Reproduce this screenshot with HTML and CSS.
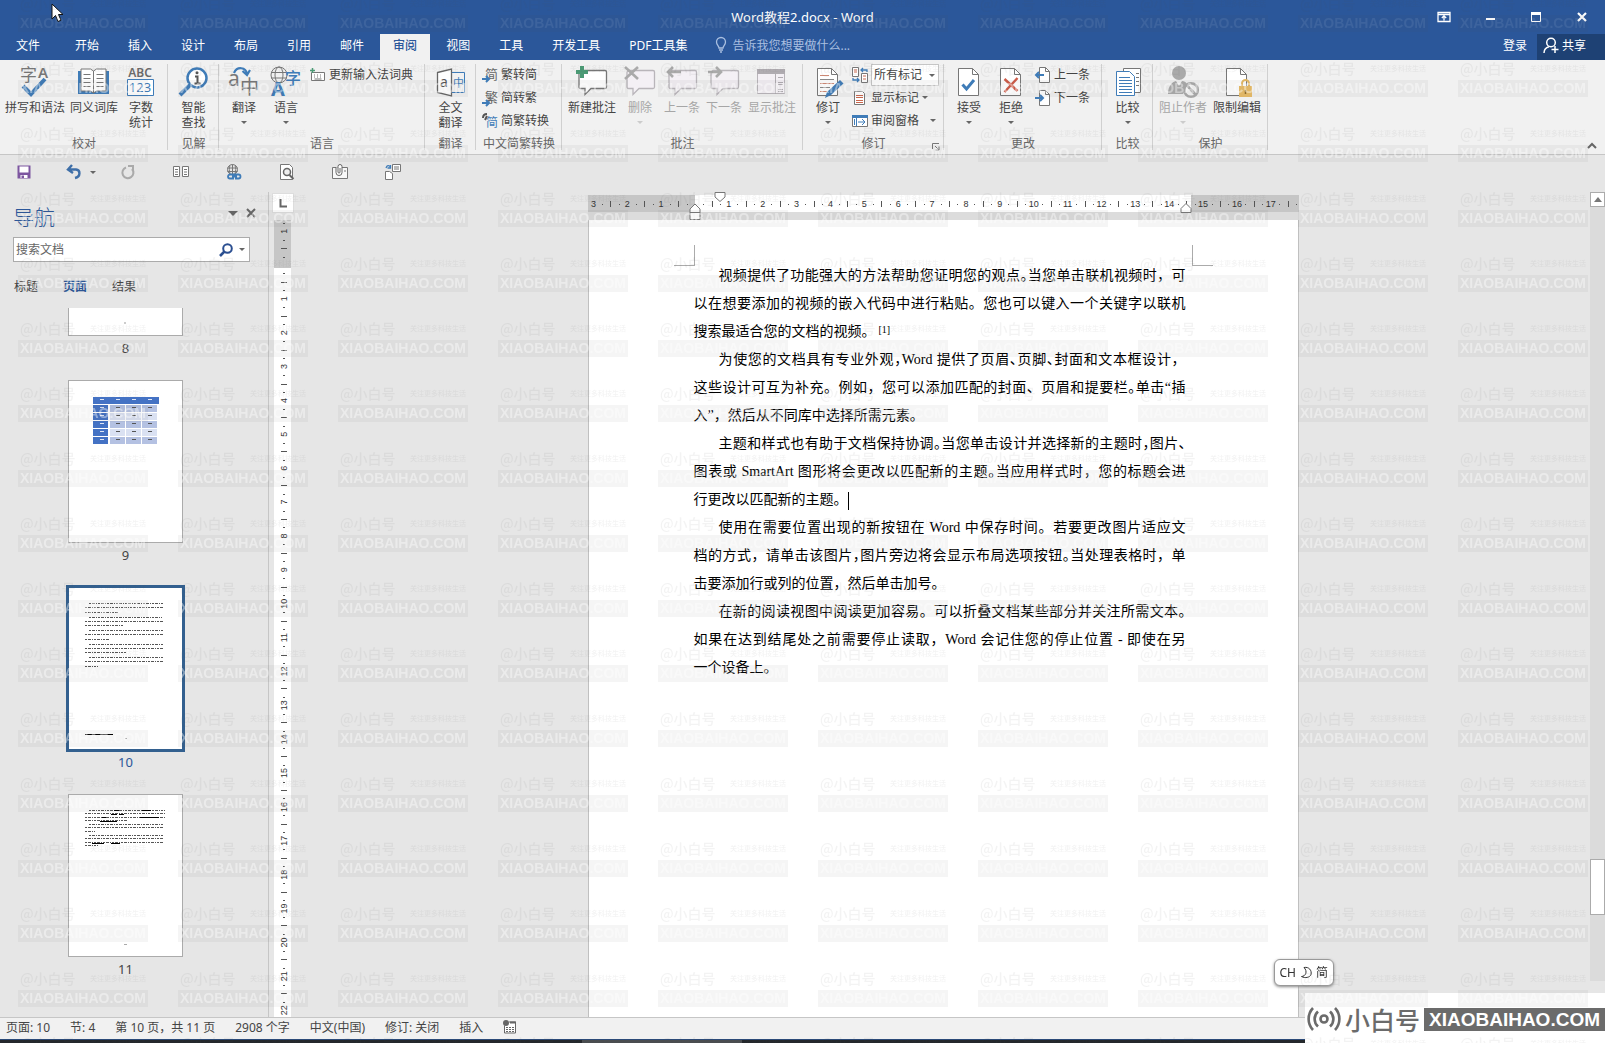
FILE: index.html
```html
<!DOCTYPE html>
<html lang="zh-CN">
<head>
<meta charset="utf-8">
<title>Word教程2.docx - Word</title>
<link rel="stylesheet" href="styles.css">
</head>
<body>
<header class="titlebar">
  <h1 class="doc-title">Word教程2.docx - Word</h1>
  <div class="window-controls">
    <button class="win-btn" aria-label="功能区显示选项"><svg width="14" height="12" viewBox="0 0 14 12"><path d="M1 1.500h12v9H1zM1 3.500h12M7 9.500V5M4.800 7L7 4.800 9.200 7" fill="none" stroke="#fff" stroke-width="1.300"/></svg></button>
    <button class="win-btn" aria-label="最小化"><svg width="14" height="12" viewBox="0 0 14 12"><path d="M3 8h9" stroke="#fff" stroke-width="2"/></svg></button>
    <button class="win-btn" aria-label="最大化"><svg width="14" height="12" viewBox="0 0 14 12"><path d="M2.500 1.500h9v9h-9z" fill="none" stroke="#fff"/><path d="M2 2.500h10" stroke="#fff" stroke-width="3"/></svg></button>
    <button class="win-btn" aria-label="关闭"><svg width="14" height="12" viewBox="0 0 14 12"><path d="M3 2l8 8M11 2l-8 8" stroke="#fff" stroke-width="2.200"/></svg></button>
  </div>
</header>

<nav class="tabs">
  <button class="tab tab-file">文件</button>
  <button class="tab">开始</button>
  <button class="tab">插入</button>
  <button class="tab">设计</button>
  <button class="tab">布局</button>
  <button class="tab">引用</button>
  <button class="tab">邮件</button>
  <button class="tab tab-active">审阅</button>
  <button class="tab">视图</button>
  <button class="tab">工具</button>
  <button class="tab">开发工具</button>
  <button class="tab">PDF工具集</button>
  <button class="tell-me"><svg width="12" height="16" viewBox="0 0 12 16"><path d="M4 11C4 9 1.500 8 1.500 5a4.500 4.500 0 0 1 9 0C10.500 8 8 9 8 11zM4 13h4M5 15h2" fill="none" stroke="#a9bfe0" stroke-width="1.300"/></svg>告诉我您想要做什么...</button>
  <button class="sign-in">登录</button>
  <button class="share"><svg width="16" height="17" viewBox="0 0 16 17"><circle cx="8" cy="5.500" r="4.300" fill="none" stroke="#fff" stroke-width="1.500"/><path d="M1 16c0-3 2-5.500 5-6.200M8.500 12.500h7M12 9v7" fill="none" stroke="#fff" stroke-width="1.500"/></svg>共享</button>
</nav>

<section class="ribbon">
  <div class="group g-proof">
    <div class="tools">
      <button class="big w60"><svg width="32" height="32" viewBox="0 0 32 32"><text x="1" y="15" font-size="17" fill="#777">字</text><text x="19" y="12" font-size="15" font-weight="600" fill="#777">A</text><path d="M4 20l8 8L26 13" fill="none" stroke="#3f7cb8" stroke-width="4"/></svg><span>拼写和语法</span></button>
      <button class="big w48"><svg width="32" height="32" viewBox="0 0 32 32"><path d="M0 5v23h31V5" fill="#3f7cb8"/><path d="M3 3h9.500l3 2 3-2H28v22h-9.500l-3 2-3-2H3z" fill="#fff" stroke="#777"/><path d="M15.500 5v22M5.500 8.500h7M5.500 12.500h7M5.500 16.500h7M5.500 20.500h7M18.500 8.500h7M18.500 12.500h7M18.500 16.500h7M18.500 20.500h7" stroke="#777"/></svg><span>同义词库</span></button>
      <button class="big w36"><svg width="32" height="32" viewBox="0 0 32 32"><text x="15" y="11" text-anchor="middle" font-size="12" font-weight="600" fill="#6a6a6a">ABC</text><path d="M2.500 13.500h26v16h-26z" fill="#fff" stroke="#3f7cb8"/><text x="15" y="26" text-anchor="middle" font-size="13" fill="#3f7cb8">123</text></svg><span>字数<br>统计</span></button>
    </div>
    <h2 class="group-name">校对</h2>
  </div>
  <div class="group g-50">
    <div class="tools center">
      <button class="big w36"><svg width="32" height="32" viewBox="0 0 32 32"><path d="M2 29l10-10" stroke="#3f7cb8" stroke-width="4"/><circle cx="19" cy="12" r="9.500" fill="#fff" stroke="#3f7cb8" stroke-width="2.500"/><path d="M17 10.500h2.500V17M16.500 17.500h6" fill="none" stroke="#555" stroke-width="2"/><circle cx="19" cy="6.800" r="1.500" fill="#555"/></svg><span>智能<br>查找</span></button>
    </div>
    <h2 class="group-name">见解</h2>
  </div>
  <div class="group g-lang">
    <div class="tools">
      <button class="big w36"><svg width="32" height="32" viewBox="0 0 32 32"><text x="0" y="20" font-size="21" fill="#777">a</text><text x="12" y="28" font-size="19" fill="#777">中</text><path d="M6 7c3-7 12-6 13 1M14.500 5l4.500 4 3-5" fill="none" stroke="#3f7cb8" stroke-width="2.200"/></svg><span>翻译</span><i class="caret"></i></button>
      <button class="big w36"><svg width="32" height="32" viewBox="0 0 32 32"><circle cx="9" cy="9" r="8" fill="none" stroke="#777"/><ellipse cx="9" cy="9" rx="4" ry="8" fill="none" stroke="#777"/><path d="M1 6.500h16M1 12h16" stroke="#777"/><text x="15" y="18" font-size="16" font-weight="500" fill="#3f7cb8">字</text><text x="1" y="30" font-size="20" font-weight="700" fill="#3f7cb8">A</text></svg><span>语言</span><i class="caret"></i></button>
      <div class="rows">
        <button class="small"><svg width="16" height="14" viewBox="0 0 16 14"><path d="M1.500 4.500h13v8h-13z" fill="#fff" stroke="#777"/><path d="M4 7h1M7 7h1M10 7h1M13 7h0M4 9h1M7 9h1M10 9h1M4.500 11h7" stroke="#777"/><path d="M0 2.500h5M2.500 0v5" stroke="#4b9a75" stroke-width="1.500"/></svg>更新输入法词典</button>
      </div>
    </div>
    <h2 class="group-name">语言</h2>
  </div>
  <div class="group g-50">
    <div class="tools center">
      <button class="big w36"><svg width="32" height="32" viewBox="0 0 32 32"><path d="M2.500 6.500L16.500 3v27l-14-3.500z" fill="#fff" stroke="#666" stroke-width="1.300"/><path d="M17 6.500h12.500v20H17" fill="none" stroke="#3f7cb8"/><text x="5" y="21" font-size="14" fill="#555">a</text><text x="18" y="21" font-size="11" fill="#3f7cb8">中</text></svg><span>全文<br>翻译</span></button>
    </div>
    <h2 class="group-name">翻译</h2>
  </div>
  <div class="group g-conv">
    <div class="tools">
      <div class="rows">
        <button class="small"><svg width="16" height="16" viewBox="0 0 16 16"><text x="3" y="12" font-size="13" fill="#666">简</text><path d="M0 12h6M4 9l3 3-3 3" fill="none" stroke="#3f7cb8" stroke-width="2"/></svg>繁转简</button>
        <button class="small"><svg width="16" height="16" viewBox="0 0 16 16"><text x="3" y="12" font-size="13" fill="#666">繁</text><path d="M0 13h6M4 10l3 3-3 3" fill="none" stroke="#3f7cb8" stroke-width="2"/></svg>简转繁</button>
        <button class="small"><svg width="16" height="16" viewBox="0 0 16 16"><text x="4" y="14" font-size="12" fill="#3f7cb8">简</text><path d="M1 5c0-3 1-4 4-4M3 7l2-4" fill="none" stroke="#555" stroke-width="2"/></svg>简繁转换</button>
      </div>
    </div>
    <h2 class="group-name">中文简繁转换</h2>
  </div>
  <div class="group g-comment">
    <div class="tools">
      <button class="big w48"><svg width="32" height="32" viewBox="0 0 32 32"><path d="M5 4.500h24a1.500 1.500 0 0 1 1.500 1.500v15a1.500 1.500 0 0 1-1.500 1.500H15l-6 6v-6H4.500a1.500 1.500 0 0 1-1.500-1.500V6z" fill="#fff" stroke="#777" stroke-width="1.300"/><path d="M0 6h12M6 0v12" stroke="#4b9a75" stroke-width="4"/></svg><span>新建批注</span></button>
      <button class="big w36" disabled><svg width="32" height="32" viewBox="0 0 32 32"><path d="M5 4.500h24a1.500 1.500 0 0 1 1.500 1.500v15a1.500 1.500 0 0 1-1.500 1.500H15l-6 6v-6H4.500a1.500 1.500 0 0 1-1.500-1.500V6z" fill="#f4f0f5" stroke="#b9b5ba" stroke-width="1.300"/><path d="M1 1l13 12M14 1L1 13" stroke="#aaa" stroke-width="2.600"/></svg><span>删除</span><i class="caret"></i></button>
      <button class="big w36" disabled><svg width="32" height="32" viewBox="0 0 32 32"><path d="M5 4.500h24a1.500 1.500 0 0 1 1.500 1.500v15a1.500 1.500 0 0 1-1.500 1.500H15l-6 6v-6H4.500a1.500 1.500 0 0 1-1.500-1.500V6z" fill="#f4f0f5" stroke="#b9b5ba" stroke-width="1.300"/><path d="M2 6h13M7 1L2 6l5 5" fill="none" stroke="#aaa" stroke-width="2.600"/></svg><span>上一条</span></button>
      <button class="big w36" disabled><svg width="32" height="32" viewBox="0 0 32 32"><path d="M5 4.500h24a1.500 1.500 0 0 1 1.500 1.500v15a1.500 1.500 0 0 1-1.500 1.500H15l-6 6v-6H4.500a1.500 1.500 0 0 1-1.500-1.500V6z" fill="#f4f0f5" stroke="#b9b5ba" stroke-width="1.300"/><path d="M0 6h13M8 1l5 5-5 5" fill="none" stroke="#aaa" stroke-width="2.600"/></svg><span>下一条</span></button>
      <button class="big w48" disabled><svg width="32" height="32" viewBox="0 0 32 32"><path d="M1.500 3.500h27v24h-27z" fill="#f4f0f5" stroke="#b9b5ba"/><path d="M1 5.500h28" stroke="#b0acb1" stroke-width="5"/><path d="M19.500 8v20M22 11.500h5M22 16.500h5M22 18.500h5M22 23.500h5M22 25.500h5" stroke="#b0acb1"/></svg><span>显示批注</span></button>
    </div>
    <h2 class="group-name">批注</h2>
  </div>
  <div class="group g-track">
    <div class="tools">
      <button class="big w36"><svg width="32" height="32" viewBox="0 0 32 32"><path d="M5.500 2.500h14l6 6v21h-20z" fill="#fff" stroke="#777"/><path d="M19.500 2.500v6h6" fill="none" stroke="#777"/><path d="M8 9.500h9M8 17.500h14M8 25.500h7" stroke="#d08a76"/><path d="M8 13.500h14M8 21.500h10" stroke="#888"/><path d="M13 32l2-6L28 14l3.500 3.500L19 29z" fill="#3f7cb8"/></svg><span>修订</span><i class="caret"></i></button>
      <div class="rows">
        <div class="small">
          <svg width="16" height="16" viewBox="0 0 16 16"><path d="M.5.500h6v9h-6zM9.500 6.500h6v9h-6z" fill="#fff" stroke="#777"/><path d="M2 3h3M2 5h3M11 9h3M11 12h3" stroke="#c8664d"/><path d="M15 5V3H9M11 1L9 3l2 2M1 11v2h6M5 11l2 2-2 2" fill="none" stroke="#3f7cb8" stroke-width="1.300"/></svg>
          <span class="select-wrap"><select class="markup-select" aria-label="显示以供审阅"><option>所有标记</option></select></span>
        </div>
        <button class="small"><svg width="16" height="16" viewBox="0 0 16 16"><path d="M2.500 1.500h8l2 2v11h-10z" fill="#fff" stroke="#777"/><path d="M4 5.500h7M4 7.500h7M4 10.500h7M4 12.500h7" stroke="#c8664d"/></svg>显示标记<i class="caret"></i></button>
        <button class="small spread"><svg width="16" height="16" viewBox="0 0 16 16"><path d="M.5 2.500h15v11H.5z" fill="#fff" stroke="#777"/><path d="M0 3.500h16" stroke="#3f7cb8" stroke-width="3"/><path d="M4.500 5v8M6 9h7M10 6l3 3-3 3M2.500 6v6" fill="none" stroke="#3f7cb8"/></svg>审阅窗格<i class="caret"></i></button>
      </div>
    </div>
    <h2 class="group-name">修订</h2>
    <button class="launcher" aria-label="修订选项"><svg width="8" height="8" viewBox="0 0 8 8"><path d="M.5 6V.5H7M3 3l4 4M7 3.500V7H3.500" fill="none" stroke="#777"/></svg></button>
  </div>
  <div class="group g-change">
    <div class="tools">
      <button class="big w36"><svg width="32" height="32" viewBox="0 0 32 32"><path d="M5.500 2.500h14l6 6v21h-20z" fill="#fff" stroke="#777"/><path d="M19.500 2.500v6h6" fill="none" stroke="#777"/><path d="M9.500 18.500l4 4.500L21 14" fill="none" stroke="#3f7cb8" stroke-width="3"/></svg><span>接受</span><i class="caret"></i></button>
      <button class="big w36"><svg width="32" height="32" viewBox="0 0 32 32"><path d="M5.500 2.500h14l6 6v21h-20z" fill="#fff" stroke="#777"/><path d="M19.500 2.500v6h6" fill="none" stroke="#777"/><path d="M9.500 13l13 12M22.500 12L9.500 26" stroke="#cf5b48" stroke-width="2.400"/></svg><span>拒绝</span><i class="caret"></i></button>
      <div class="rows">
        <button class="small"><svg width="16" height="16" viewBox="0 0 16 16"><path d="M4.500.5h6l4 4v11h-10z" fill="#fff" stroke="#777"/><path d="M10.500.5v4h4" fill="none" stroke="#777"/><path d="M1 8h8M4 5L1 8l3 3" fill="none" stroke="#3f7cb8" stroke-width="2"/></svg>上一条</button>
        <button class="small"><svg width="16" height="16" viewBox="0 0 16 16"><path d="M4.500.5h6l4 4v11h-10z" fill="#fff" stroke="#777"/><path d="M10.500.5v4h4" fill="none" stroke="#777"/><path d="M0 8h8M5 5l3 3-3 3" fill="none" stroke="#3f7cb8" stroke-width="2"/></svg>下一条</button>
      </div>
    </div>
    <h2 class="group-name">更改</h2>
  </div>
  <div class="group g-50">
    <div class="tools center">
      <button class="big w36"><svg width="32" height="32" viewBox="0 0 32 32"><path d="M11.500 2.500h17v24h-17z" fill="#fff" stroke="#777"/><path d="M4.500 5.500h13l5 5v19h-18z" fill="#fff" stroke="#3f7cb8"/><path d="M7 11.500h11M7 14.500h13M7 17.500h13M7 20.500h13M7 23.500h13M7 26.500h13" stroke="#3f7cb8"/><path d="M24 7.500h3M24 11.500h3M24 15.500h3M24 19.500h3" stroke="#777"/></svg><span>比较</span><i class="caret"></i></button>
    </div>
    <h2 class="group-name">比较</h2>
  </div>
  <div class="group g-protect">
    <div class="tools">
      <button class="big w48" disabled><svg width="32" height="32" viewBox="0 0 32 32"><circle cx="12" cy="7" r="7" fill="#aaa"/><path d="M1 28c0-8 4-12 8-13l3 5 3-5c2 0 4 1 5 3l-4 10z" fill="#aaa"/><circle cx="24" cy="24" r="6.800" fill="#f4f4f4" stroke="#aaa" stroke-width="2.600"/><path d="M19.500 19l9 9.500" stroke="#aaa" stroke-width="2.600"/></svg><span>阻止作者</span><i class="caret"></i></button>
      <button class="big w48"><svg width="32" height="32" viewBox="0 0 32 32"><path d="M5.500 2.500h14l6 6v21h-20z" fill="#fff" stroke="#777"/><path d="M19.500 2.500v6h6" fill="none" stroke="#777"/><path d="M21 21v-3.500a3.500 3.500 0 0 1 7 0V21" fill="none" stroke="#e5b964" stroke-width="2"/><path d="M18 20h13v11H18z" fill="#e9bd68"/><path d="M24.500 24v4" stroke="#8d6a2a" stroke-width="1.500"/></svg><span>限制编辑</span></button>
    </div>
    <h2 class="group-name">保护</h2>
  </div>
  <button class="collapse" aria-label="折叠功能区"><svg width="10" height="8" viewBox="0 0 10 8"><path d="M1 6l4-4 4 4" fill="none" stroke="#666" stroke-width="2"/></svg></button>
</section>

<div class="quick">
  <button aria-label="保存"><svg width="16" height="16" viewBox="0 0 16 16"><path d="M1.500 1.500h13v13h-13z" fill="#7d56a0"/><path d="M3.500 2.500h9v6h-9zM4.500 11h7v3h-7z" fill="#fff"/><path d="M5.500 11.500h2.500v2.500H5.500z" fill="#7d56a0"/></svg></button>
  <button class="undo" aria-label="撤消"><svg width="16" height="16" viewBox="0 0 16 16"><path d="M6 1L2 5.500 7 9M2.500 5.500H10c4.500.5 5 7-1 8.500" fill="none" stroke="#3f6fa8" stroke-width="2.400"/></svg><i class="caret"></i></button>
  <button aria-label="恢复"><svg width="16" height="16" viewBox="0 0 16 16"><path d="M6 3.500a5.500 5.500 0 1 0 6 1.500M8 2h5v5" fill="none" stroke="#aaa" stroke-width="2"/></svg></button>
  <button aria-label="双页"><svg width="16" height="16" viewBox="0 0 16 16"><path d="M.5 2.500h6v10h-6zM9.500 2.500h6v10h-6z" fill="#fff" stroke="#777"/><path d="M2 5.500h3M2 8h3M2 10.500h3M11 5.500h3M11 8h3M11 10.500h3" stroke="#777"/></svg></button>
  <button aria-label="超链接"><svg width="16" height="16" viewBox="0 0 16 16"><circle cx="6.500" cy="5.500" r="5" fill="none" stroke="#777"/><path d="M1.500 4h10M1.500 7.500h10M6.500.5v10M4 1.500c-1 3-1 5 0 8M9 1.500c1 3 1 5 0 8" fill="none" stroke="#777"/><path d="M8 10.500H4a2 2 0 0 0 0 4h4M8 10.500h4.500a2 2 0 0 1 0 4H9M6 12.500h5" fill="none" stroke="#3f7cb8" stroke-width="1.800"/></svg></button>
  <button aria-label="打印预览"><svg width="16" height="16" viewBox="0 0 16 16"><path d="M1.500.5h9l3 3v12h-12z" fill="#fff" stroke="#777"/><circle cx="8" cy="8" r="3.500" fill="#eee" stroke="#666" stroke-width="1.500"/><path d="M10.500 11l4 4" stroke="#666" stroke-width="2"/></svg></button>
  <button aria-label="附件"><svg width="16" height="16" viewBox="0 0 16 16"><path d="M.5 3.500h15v11H.5z" fill="#f8f8f8" stroke="#777"/><path d="M4 3v5.500a3 3 0 0 0 6 0V2.500a2 2 0 0 0-4 0V8c0 1.500 2 1.500 2 0V4" fill="#fff" stroke="#666"/><path d="M12 7h2" stroke="#777"/></svg></button>
  <button aria-label="切换窗口"><svg width="16" height="16" viewBox="0 0 16 16"><path d="M7.500.5h8v7h-8z" fill="#fff" stroke="#777"/><path d="M9 3h5M9 5h5" stroke="#777"/><path d="M.5 7.500h4l3 2v6h-7z" fill="#fff" stroke="#777"/><path d="M1 4c1-3 3-3 4.500-1M5.500 1v3h-3" fill="none" stroke="#3f7cb8" stroke-width="1.300"/></svg></button>
</div>

<main class="workspace">
  <aside class="nav-pane">
    <div class="nav-head">
      <h2>导航</h2>
      <button class="nav-menu" aria-label="任务窗格选项"><i class="caret caret-lg"></i></button>
      <button class="nav-close" aria-label="关闭"><svg width="10" height="10" viewBox="0 0 10 10"><path d="M1 1l8 8M9 1L1 9" stroke="#666" stroke-width="2"/></svg></button>
    </div>
    <div class="search">
      <input type="text" placeholder="搜索文档" aria-label="搜索文档">
      <button aria-label="搜索"><svg width="14" height="14" viewBox="0 0 14 14"><circle cx="8.500" cy="5.500" r="4.300" fill="none" stroke="#2b4f91" stroke-width="2"/><path d="M1 13l4.500-4.500" stroke="#2b4f91" stroke-width="2.600"/></svg></button>
      <i class="caret"></i>
    </div>
    <div class="nav-tabs">
      <button>标题</button>
      <button class="on">页面</button>
      <button>结果</button>
    </div>
    <ol class="thumbs">
      <li><div class="thumb"><svg width="113" height="161" viewBox="0 0 113 161"><path d="M56 148v2" stroke="#999"/></svg></div><span>8</span></li>
      <li><div class="thumb"><svg id="thumbTable" width="113" height="161" viewBox="0 0 113 161"></svg></div><span>9</span></li>
      <li class="current"><div class="thumb"><svg id="thumbText" width="113" height="161" viewBox="0 0 113 161"></svg></div><span>10</span></li>
      <li><div class="thumb"><svg id="thumbMarked" width="113" height="161" viewBox="0 0 113 161"></svg></div><span>11</span></li>
    </ol>
  </aside>

  <div class="v-side">
    <button class="tab-stop" aria-label="左对齐制表符"><svg width="8" height="9" viewBox="0 0 8 9"><path d="M1.500 0v7.500H8" fill="none" stroke="#666" stroke-width="2"/></svg></button>
    <svg class="v-ruler" id="vRuler"></svg>
  </div>

  <div class="canvas">
    <div class="h-ruler">
      <svg id="hRuler" width="711" height="17"></svg>
      <svg class="indent indent-first" width="12" height="10" viewBox="0 0 12 10"><path d="M1 .5h10v4.500l-5 4.500L1 5z" fill="#fff" stroke="#777"/></svg>
      <svg class="indent indent-left" width="12" height="17" viewBox="0 0 12 17"><path d="M1 16.500V6l5-5 5 5v10.500zM1 9.500h10" fill="#fff" stroke="#777"/></svg>
      <svg class="indent indent-right" width="12" height="10" viewBox="0 0 12 10"><path d="M1 9.500V5.500l5-5 5 5v4z" fill="#fff" stroke="#777"/></svg>
    </div>
    <article class="page">
      <div class="crop-marks"><i></i><i></i></div>
      <div class="doc">
        <p><span class="ln first">视频提供了功能强大的方法帮助您证明您的观点<b>。</b>当您单击联机视频时，可</span><span class="ln">以在想要添加的视频的嵌入代码中进行粘贴。您也可以键入一个关键字以联机</span><span class="ln last">搜索最适合您的文档的视频。<sup>[1]</sup></span></p>
        <p><span class="ln first">为使您的文档具有专业外观<b>，</b>Word 提供了页眉<b>、</b>页脚<b>、</b>封面和文本框设计，</span><span class="ln">这些设计可互为补充。例如，您可以添加匹配的封面、页眉和提要栏<b>。</b>单击“插</span><span class="ln last">入”，然后从不同库中选择所需元素。</span></p>
        <p><span class="ln first">主题和样式也有助于文档保持协调<b>。</b>当您单击设计并选择新的主题时<b>，</b>图片<b>、</b></span><span class="ln">图表或 SmartArt 图形将会更改以匹配新的主题<b>。</b>当应用样式时，您的标题会进</span><span class="ln last">行更改以匹配新的主题。<i class="text-cursor"></i></span></p>
        <p><span class="ln first">使用在需要位置出现的新按钮在 Word 中保存时间。若要更改图片适应文</span><span class="ln">档的方式，请单击该图片<b>，</b>图片旁边将会显示布局选项按钮<b>。</b>当处理表格时，单</span><span class="ln last">击要添加行或列的位置，然后单击加号。</span></p>
        <p><span class="ln first">在新的阅读视图中阅读更加容易。可以折叠文档某些部分并关注所需文本<b>。</b></span><span class="ln">如果在达到结尾处之前需要停止读取，Word 会记住您的停止位置 - 即使在另</span><span class="ln last">一个设备上。</span></p>
      </div>
    </article>
  </div>

  <div class="scrollbar">
    <button aria-label="向上滚动"><svg width="8" height="5" viewBox="0 0 8 5"><path d="M0 5l4-5 4 5z" fill="#777"/></svg></button>
    <div class="scroll-thumb"></div>
  </div>
</main>

<footer class="status">
  <span>页面: 10</span><span>节: 4</span><span>第 10 页，共 11 页</span><span>2908 个字</span><span>中文(中国)</span><span>修订: 关闭</span><span>插入</span>
  <svg width="14" height="14" viewBox="0 0 14 14"><path d="M1.500 5.500v7.500h11v-11H6" fill="#fff" stroke="#666"/><circle cx="3" cy="3" r="3" fill="#666"/><path d="M7 2.500h6" stroke="#666" stroke-width="2"/><path d="M3 7.500h8M3 9.500h8M3 11.500h8" stroke="#666" stroke-dasharray="2 1"/></svg>
</footer>
<div class="taskbar"></div>

<div class="ime">CH <svg width="12" height="13" viewBox="0 0 12 13"><path d="M4 1.500c5-1 8 3 7 7-1 3-6 4-9.500 2 4 0 6.500-5 2.500-9z" fill="none" stroke="#333"/></svg> 简</div>

<div class="brand">
  <svg width="36" height="26" viewBox="0 0 36 26"><g fill="none" stroke="#6b6b6b" stroke-width="2.600"><circle cx="18" cy="13" r="3.500"/><path d="M12 5.500a10 10 0 0 0 0 15M24 5.500a10 10 0 0 1 0 15M7 2a16 16 0 0 0 0 22M29 2a16 16 0 0 1 0 22"/></g></svg>
  <span class="brand-name">小白号</span><span class="brand-url">XIAOBAIHAO.COM</span>
</div>

<svg class="pointer" width="14" height="20" viewBox="0 0 14 20"><path d="M1 1v15l3.500-3.500L7 18.500l3-1.300L7.500 11.500H12z" fill="#fff" stroke="#111"/></svg>
<div class="watermark" id="watermark" aria-hidden="true"></div>
<script src="app.js"></script>
</body>
</html>
```
FILE: styles.css
```css
* { box-sizing: border-box; }
body {
  margin: 0;
  height: 100vh;
  display: flex;
  flex-direction: column;
  overflow: hidden;
  background: #e6e6e6;
  color: #444;
  font: 12px/15px "Noto Sans", "Noto Sans CJK SC", sans-serif;
}
button {
  font: inherit;
  color: inherit;
  background: none;
  border: 0;
  padding: 0;
  white-space: nowrap;
}
h1, h2, p, ol { margin: 0; padding: 0; font-size: inherit; font-weight: 400; }
svg { display: block; flex: none; overflow: visible; }

.titlebar {
  flex: none;
  height: 34px;
  display: grid;
  grid-template-columns: 1fr auto 1fr;
  align-items: center;
  background: #2b579a;
  color: #fff;
}
.doc-title { grid-column: 2; font-size: 13px; }
.window-controls { display: flex; justify-content: flex-end; }
.win-btn { width: 46px; height: 30px; display: grid; place-items: center; }

.tabs {
  flex: none;
  height: 26px;
  display: flex;
  gap: 3px;
  background: #2b579a;
  color: #fff;
}
.tab { padding: 0 13px; }
.tab, .sign-in, .share, .tell-me { padding-bottom: 4px; }
.tab-file { padding-left: 16px; padding-right: 19px; }
.tab-active { background: #f1f1f1; color: #2b579a; font-weight: 500; }
.tell-me { display: flex; align-items: center; gap: 5px; color: #a9bfe0; padding-left: 12px; }
.sign-in { margin-left: auto; margin-right: 7px; }
.share { width: 68px; display: flex; align-items: center; gap: 3px; padding-left: 6px; background: #1e4174; }

.ribbon {
  flex: none;
  height: 95px;
  display: flex;
  background: #f1f1f1;
  border-bottom: 1px solid #c6c6c6;
}
.group {
  position: relative;
  flex: none;
  display: flex;
  flex-direction: column;
}
.group::after {
  content: "";
  position: absolute;
  right: 0;
  top: 4px;
  bottom: 4px;
  border-right: 1px solid #d0d0d0;
}
.g-proof { width: 168px; }
.g-50 { width: 51px; }
.g-lang { width: 206px; }
.g-conv { width: 86px; }
.g-comment { width: 241px; }
.g-track { width: 141px; }
.g-change { width: 158px; }
.g-protect { width: 115px; }
.tools { flex: 1; display: flex; gap: 6px; padding-left: 6px; }
.center { justify-content: center; padding: 0; }
.group-name { line-height: 15px; margin-bottom: 3px; text-align: center; color: #666; }
.big {
  display: flex;
  flex-direction: column;
  align-items: center;
  padding-top: 6px;
}
.big svg { margin-bottom: 2px; }
.w36 { width: 36px; }
.w48 { width: 48px; }
.w60 { width: 60px; }
.big:disabled { color: #a6a6a6; }
.g-proof .tools { padding-left: 5px; gap: 5px; }
.g-lang .tools { padding-left: 7px; }
.rows { display: flex; flex-direction: column; padding-top: 3px; }
.small { height: 23px; display: flex; align-items: center; gap: 3px; }
.caret {
  flex: none;
  display: block;
  width: 0;
  height: 0;
  border: 3px solid transparent;
  border-top-color: #666;
  border-bottom: 0;
}
.caret-lg { border-width: 5px; border-bottom: 0; }
.big .caret { margin-top: 6px; }
.big:disabled .caret { border-top-color: #ccc; }
.g-track .tools, .g-change .tools { padding-left: 7px; }
.spread .caret { margin-left: 8px; }
.select-wrap { position: relative; }
.select-wrap::after {
  content: "";
  position: absolute;
  right: 4px;
  top: 10px;
  border: 3px solid transparent;
  border-top-color: #666;
  border-bottom: 0;
  pointer-events: none;
}
.markup-select {
  display: block;
  appearance: none;
  width: 68px;
  height: 22px;
  padding: 0 2px;
  border: 1px solid #c6c6c6;
  border-radius: 0;
  background: #fff;
  font: inherit;
  color: #444;
}
.launcher { position: absolute; right: 4px; bottom: 3px; }
.collapse { margin-left: auto; align-self: flex-end; padding: 4px 8px; }

.quick {
  flex: none;
  height: 37px;
  display: flex;
  align-items: center;
  gap: 37px;
  padding: 0 16px 3px;
}
.undo { display: flex; align-items: center; gap: 8px; margin: 0 -24px 0 -3px; }
.undo + button { margin-left: 11px; }

.workspace { flex: 1; min-height: 0; display: flex; }
.nav-pane {
  width: 269px;
  flex: none;
  display: flex;
  flex-direction: column;
  border-right: 1px solid #c6c6c6;
}
.nav-head { display: flex; align-items: center; height: 45px; padding: 0 12px 0 13px; }
.nav-head h2 { flex: 1; font-size: 21px; line-height: 28px; padding-top: 4px; color: #2b579a; font-weight: 300; }
.nav-menu { padding-bottom: 3px; }
.nav-close { padding: 0 0 3px 8px; }
.search {
  display: flex;
  align-items: center;
  gap: 6px;
  height: 25px;
  margin: 0 18px 0 13px;
  padding-right: 4px;
  border: 1px solid #ababab;
  background: #fff;
}
.search input { flex: 1; min-width: 0; border: 0; padding: 0 2px; font: inherit; outline: 0; background: none; }
.search input::placeholder { color: #666; opacity: 1; }
.nav-tabs { display: flex; gap: 25px; padding: 17px 14px 14px; }
.nav-tabs .on { color: #2b579a; font-weight: 700; }
.thumbs {
  flex: 1;
  min-height: 0;
  overflow: hidden;
  list-style: none;
  display: flex;
  flex-direction: column;
  justify-content: flex-end;
  padding-bottom: 16px;
}
.thumbs li { flex: none; height: 207px; display: flex; flex-direction: column; align-items: center; font-size: 13px; padding-right: 17px; }
.thumb { flex: none; margin-bottom: 5px; background: #fff; border: 1px solid #ababab; }
.current { color: #2b579a; }
.current .thumb { outline: 2px solid #33608f; border-color: #33608f; }

.v-side { width: 27px; flex: none; display: flex; flex-direction: column; align-items: center; padding-top: 1px; }
.tab-stop { width: 22px; height: 20px; display: grid; place-items: center; background: #fff; border: 1px solid #ddd; margin-bottom: 7px; flex: none; }
.v-ruler { flex: 1; min-height: 0; width: 17px; background: #fff; overflow: hidden; }

.canvas { flex: 1; min-width: 0; display: flex; flex-direction: column; align-items: center; padding-top: 3px; overflow: hidden; }
.h-ruler { position: relative; height: 25px; width: 711px; flex: none; background: linear-gradient(#e6e6e6 17px, #dcdcdc 17px); }
.indent { position: absolute; }
.indent-first { left: 126px; top: -3px; }
.indent-left { left: 101px; top: 8px; }
.indent-right { left: 592px; top: 8px; }
.page { width: 711px; flex: 1; background: #fff; border: 1px solid #c0c0c0; border-width: 0 1px; padding: 25px 85px 0; }
.crop-marks { display: flex; justify-content: space-between; height: 17px; }
.crop-marks i { width: 21px; height: 21px; border: 1px solid #ababab; border-width: 0 1px 1px 0; }
.crop-marks i:last-child { border-width: 0 0 1px 1px; }
.doc {
  padding: 0 27px 0 20px;
  color: #000;
  font: 14px/28px "Liberation Serif", "Noto Sans CJK SC", serif;
}
.ln { display: block; text-align: justify; text-align-last: justify; white-space: nowrap; }
.first { padding-left: 25px; }
.last { text-align: left; text-align-last: left; }
.doc b { font-weight: inherit; font-feature-settings: "halt"; }
.doc sup { font-size: 10px; line-height: 1; vertical-align: 3px; margin-left: 3px; }
.text-cursor { display: inline-block; height: 18px; border-left: 1px solid #000; vertical-align: middle; }

.scrollbar { width: 15px; flex: none; background: #dbdbdb; display: flex; flex-direction: column; margin-bottom: 36px; }
.scrollbar button { height: 15px; display: grid; place-items: center; background: #fff; border: 1px solid #ababab; }
.scroll-thumb { height: 56px; margin-top: auto; margin-bottom: 66px; background: #fff; border: 1px solid #ababab; }

.status {
  flex: none;
  height: 22px;
  display: flex;
  align-items: center;
  gap: 20px;
  padding: 0 6px 3px;
  border-top: 1px solid #c6c6c6;
  background: #f1f1f1;
}
.taskbar { flex: none; height: 4px; background: linear-gradient(90deg, #24282c 582px, #4a4d50 582px, #4a4d50 742px, #24282c 742px); border-top: 1px solid #2b4a78; }

.ime {
  position: fixed;
  right: 271px;
  bottom: 57px;
  display: flex;
  align-items: center;
  gap: 4px;
  height: 27px;
  padding: 0 5px;
  border: 1px solid #999;
  border-radius: 6px;
  background: #fff;
  box-shadow: 0 1px 3px #888;
  color: #333;
}
.brand {
  position: fixed;
  right: 0;
  bottom: 0;
  width: 300px;
  height: 50px;
  padding: 2px 0 0 1px;
  display: flex;
  align-items: center;
  background: #fff;
}
.brand-name { flex: 1; font: 500 25px/24px "Noto Sans CJK SC", sans-serif; color: #6b6b6b; padding-left: 3px; white-space: nowrap; }
.brand-url { width: 181px; flex: none; font: 700 19px/23px "Liberation Sans", sans-serif; color: #fff; background: #6b6b6b; text-align: center; }
.pointer { position: fixed; left: 51px; top: 3px; }

.watermark {
  position: fixed;
  inset: -6px -40px 0 18px;
  overflow: hidden;
  pointer-events: none;
  display: grid;
  grid-template-columns: repeat(auto-fill, 160px);
  grid-auto-rows: 65px;
}
.mark { width: 130px; color: rgba(80, 80, 80, 0.07); font-family: "Noto Sans CJK SC", sans-serif; font-weight: 500; }
.mark-top { display: flex; justify-content: space-between; align-items: center; height: 21px; padding: 0 2px 2px; font-size: 14px; }
.mark-top small { font-size: 7px; }
.mark-url { height: 17px; background: rgba(80, 80, 80, 0.06); color: rgba(255, 255, 255, 0.4); font: 700 14px/17px "Liberation Sans", sans-serif; text-align: center; }
.mark-dark .mark-url { color: rgba(255, 255, 255, 0.08); }
```
FILE: app.js
```js
const NS = "http://www.w3.org/2000/svg";
function add(parent, name, attrs, text) {
  const el = document.createElementNS(NS, name);
  for (const key in attrs) el.setAttribute(key, attrs[key]);
  if (text !== undefined) el.textContent = text;
  parent.appendChild(el);
  return el;
}

// One centimetre on screen at the current zoom.
const CM = 33.87;

const h = document.getElementById("hRuler");
add(h, "rect", { width: 711, height: 17, fill: "#c6c6c6" });
add(h, "rect", { x: 107, width: 496, height: 17, fill: "#fff" });
for (let q = -13; q <= 71; q++) {
  const x = 107 + q * CM / 4;
  if (x < 2 || x > 709) continue;
  if (q % 4 === 0) {
    if (q !== 0) add(h, "text", { x: x, y: 12, "text-anchor": "middle", class: "num" }, Math.abs(q / 4));
  } else {
    const half = q % 2 === 0;
    add(h, "rect", { x: Math.round(x), y: half ? 6 : 9, width: 1, height: half ? 6 : 1, fill: "#555" });
  }
}

const v = document.getElementById("vRuler");
add(v, "rect", { width: 17, height: 48, fill: "#c6c6c6" });
for (let q = -5; q <= 120; q++) {
  const y = 45 + q * CM / 4;
  if (q % 4 === 0) {
    if (q !== 0) add(v, "text", { transform: `translate(13 ${y}) rotate(-90)`, "text-anchor": "middle", class: "num" }, Math.abs(q / 4));
  } else {
    const half = q % 2 === 0;
    add(v, "rect", { x: half ? 7 : 9, y: Math.round(y), width: half ? 6 : 2, height: 1, fill: "#555" });
  }
}
document.querySelectorAll(".num").forEach(t => {
  t.style.font = '9px "Liberation Sans", sans-serif';
  t.style.fill = "#333";
});

// Page miniatures
const table = document.getElementById("thumbTable");
for (let r = 0; r < 6; r++) {
  for (let c = 0; c < 4; c++) {
    const head = r === 0 || c === 0;
    add(table, "rect", { x: 24 + c * 16 + (c ? 1 : 0), y: 16 + r * 8, width: r === 0 ? 17 : 15, height: 7,
      fill: head ? "#4472c4" : r % 2 ? "#b4c1e2" : "#dae1f2" });
    add(table, "rect", { x: 31 + c * 16, y: 18 + r * 8, width: 4, height: 1, fill: head ? "#dfe6f5" : "#555" });
  }
}
function lines(svg, rows) {
  rows.forEach(([x, y, end]) => add(svg, "path", { d: `M${x} ${y + 0.5}H${end}`, stroke: "#555", "stroke-dasharray": "2 1 3 1 1 1" }));
}
const text = document.getElementById("thumbText");
lines(text, [[20, 15, 95], [16, 19, 95], [16, 24, 49], [20, 29, 93], [16, 33, 95], [16, 37, 54], [20, 42, 95], [16, 46, 95], [16, 51, 40],
  [20, 56, 95], [16, 60, 95], [16, 64, 57], [20, 69, 95], [16, 73, 95], [16, 78, 29]]);
add(text, "rect", { x: 16, y: 146, width: 28, height: 1, fill: "#000" });
add(text, "rect", { x: 56, y: 150, width: 2, height: 1, fill: "#aaa" });
const marked = document.getElementById("thumbMarked");
lines(marked, [[20, 15, 96], [16, 18, 96], [16, 22, 96], [16, 25, 59], [20, 29, 94], [16, 32, 95], [16, 36, 26],
  [20, 40, 94], [16, 43, 95], [16, 47, 94], [16, 50, 29]]);
[[45, 15, 5], [73, 15, 9], [42, 19, 6], [50, 19, 5], [33, 22, 4], [71, 22, 19], [31, 26, 17], [23, 48, 12], [42, 48, 9]].forEach(([x, y, w]) =>
  add(marked, "rect", { x: x, y: y, width: w, height: 1, fill: "#000" }));
add(marked, "rect", { x: 55, y: 149, width: 3, height: 1, fill: "#aaa" });

// Watermark tiles
const wm = document.getElementById("watermark");
const cols = Math.floor((window.innerWidth + 22) / 160);
const rows = Math.ceil((window.innerHeight + 6) / 65);
for (let i = 0; i < cols * rows; i++) {
  const d = document.createElement("div");
  d.className = i < cols ? "mark mark-dark" : "mark";
  d.innerHTML = '<div class="mark-top">@小白号<small>关注更多科技生活</small></div><div class="mark-url">XIAOBAIHAO.COM</div>';
  wm.appendChild(d);
}
```
